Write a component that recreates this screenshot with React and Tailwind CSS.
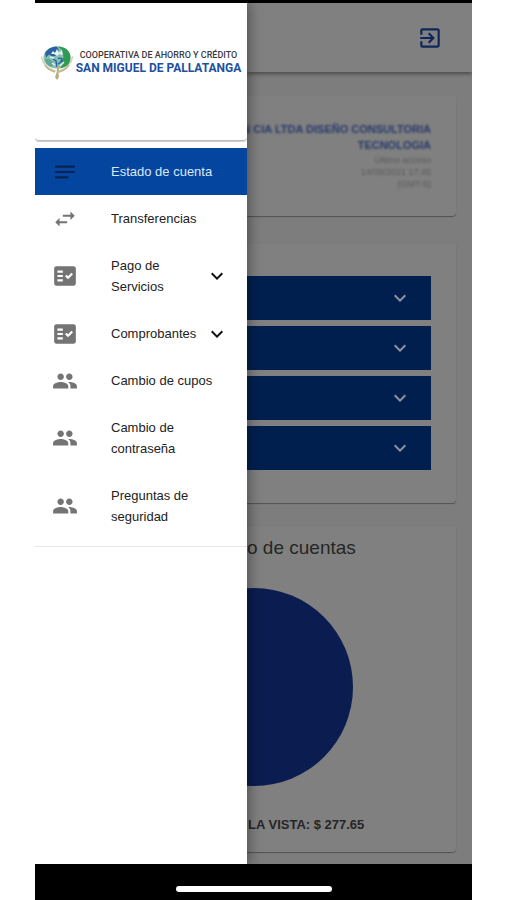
import React from "react";
import {
  MdNotes,
  MdSwapHoriz,
  MdFactCheck,
  MdPeople,
  MdExpandMore,
  MdExitToApp,
} from "react-icons/md";

const menu = [
  { label: "Estado de cuenta", icon: MdNotes, active: true },
  { label: "Transferencias", icon: MdSwapHoriz },
  { label: "Pago de Servicios", icon: MdFactCheck, expands: true },
  { label: "Comprobantes", icon: MdFactCheck, expands: true },
  { label: "Cambio de cupos", icon: MdPeople },
  { label: "Cambio de contraseña", icon: MdPeople },
  { label: "Preguntas de seguridad", icon: MdPeople },
];

const accounts = ["Ahorros", "Inversiones", "Créditos", "Certificados"];

function LogoMark() {
  return (
    <svg viewBox="0 0 34 36" className="h-9 w-[34px] shrink-0" aria-hidden="true">
      <path d="M1.5 12C3 20 8 24 15 26M32.5 12C31 20 26 24 19 26" fill="none" stroke="#d9d0b2" strokeWidth="1.500" strokeLinecap="round" />
      <ellipse cx="17" cy="12.500" rx="13.500" ry="11" fill="#86bfae" />
      <path d="M18 1.500c8 0 12.500 5 12.500 11S27 22 20 23.500c3-4 1-7 3-10s-2-4-1-7-3-3-4-5z" fill="#2f9a53" />
      <path d="M5 8c3-5 8-6.500 12-6.500l2 4-4 2 2 3-5 1-3-2-3 3z" fill="#2b62a4" />
      <path d="M5 14c3-1 6 1 8 3l-1 5c-4-1-7-4-7-8z" fill="#5fa79a" />
      <path d="M11 9l2-3 2 2 2-4 2 4 3-3 1 5-4-1-2 2-3-2z" fill="#e6f2f3" />
      <path d="M13 14l3 2 1 6M22 13l-1 4-3 2M18 13.500c3-1 4 0 4 3" fill="none" stroke="#2b62a4" strokeWidth="1.500" />
      <path d="M10 12l4 1M12 18l3 2M24 17l-4 4" fill="none" stroke="#e6f2f3" strokeWidth="1.500" />
      <path d="M17 20c0 5 0 8-2 12l2 3 2-3c-1-4 0-7 0-12z" fill="#b9ac7d" />
      <path d="M5 20c3 5 7 6 10 7M29 20c-3 5-7 6-10 7" fill="none" stroke="#c2b78c" strokeWidth="1.500" />
    </svg>
  );
}

function MenuItem({ label, icon: Icon, active, expands }) {
  return (
    <li>
      <button
        type="button"
        className={
          "flex w-full items-center py-[13px] pr-[18px] pl-[17px] text-left text-[13px] leading-[21px] " +
          (active ? "bg-[#04459f] text-[#dce6f5]" : "text-[#222222]")
        }
      >
        <Icon className={"mr-[33px] size-[26px] shrink-0 -my-1 " + (active ? "text-[#0a2352]" : "text-[#747474]")} />
        <span className="flex-1">{label}</span>
        {expands && <MdExpandMore className="size-6 shrink-0 -my-1 text-[#111111]" />}
      </button>
    </li>
  );
}

function Drawer() {
  return (
    <aside className="relative z-10 w-[212px] shrink-0 bg-white shadow-[2px_0_12px_rgba(0,0,0,0.4)]">
      <div className="flex h-[138px] items-start rounded-b border-b border-[#bcbcbc] pt-[42px] pr-1 pl-[5px] shadow-[0_1px_1px_rgba(0,0,0,0.2)]">
        <LogoMark />
        <div className="flex flex-1 flex-col items-center pt-1 font-['Roboto','Liberation_Sans',sans-serif] whitespace-nowrap">
          <p className="text-[9px] leading-3 font-medium text-[#3c3c3f]">COOPERATIVA DE AHORRO Y CRÉDITO</p>
          <p className="text-[12px] leading-[14px] font-bold text-[#1d509f]">SAN MIGUEL DE PALLATANGA</p>
        </div>
      </div>
      <nav className="border-b border-[#e6e6e6] pt-[7px] pb-[6px]">
        <ul>
          {menu.map((item) => (
            <MenuItem key={item.label} {...item} />
          ))}
        </ul>
      </nav>
    </aside>
  );
}

function Card({ children, className }) {
  return (
    <section className={"mr-4 rounded-br bg-[#808080] pr-[25px] shadow-[0_1px_1px_rgba(0,0,0,0.35)] " + className}>
      {children}
    </section>
  );
}

function Content() {
  return (
    <main className="min-w-0 flex-1 overflow-hidden bg-[#7d7d7d] pb-3">
      <header className="flex h-[69px] items-center justify-end bg-[#808080] pr-[29px] shadow-[0_2px_4px_rgba(0,0,0,0.4)]">
        <button type="button" aria-label="Salir" className="text-[#10265a]">
          <MdExitToApp className="size-[26px]" />
        </button>
      </header>

      <Card className="mt-6 h-[120px] pt-[25px] text-right">
        <div className="flex flex-col items-end blur-[1px]">
          <p className="text-[11px] leading-4 font-bold whitespace-nowrap text-[#27396b]">
            N CIA LTDA DISEÑO CONSULTORIA
            <br />
            TECNOLOGIA
          </p>
          <p className="pt-px text-[9px] leading-[12px] text-[#5a5a5a]">
            Último acceso
            <br />
            14/09/2021 17:45
            <br />
            (GMT-5)
          </p>
        </div>
      </Card>

      <Card className="mt-7 pt-8 pb-[33px]">
        <div className="flex flex-col gap-[6px]">
          {accounts.map((name) => (
            <button
              key={name}
              type="button"
              aria-label={name}
              className="flex h-11 w-full items-center justify-end bg-[#001f4f] pr-[19px] text-[#8d949f]"
            >
              <MdExpandMore className="size-6" />
            </button>
          ))}
        </div>
      </Card>

      <Card className="mt-6 pt-[9px] pb-[17px] text-[#262626]">
        <h2 className="text-[19px] leading-6 whitespace-nowrap">o de cuentas</h2>
        <svg viewBox="0 0 106 198" className="mt-7 h-[198px] w-[106px]" role="img" aria-label="Gráfico de cuentas">
          <circle cx="7" cy="99" r="99" fill="#0b1d50" />
        </svg>
        <p className="mt-[29px] pl-px text-[13px] leading-5 font-bold whitespace-nowrap">LA VISTA: $ 277.65</p>
      </Card>
    </main>
  );
}

export default function App() {
  return (
    <div className="min-h-screen bg-white px-[35px] font-['Liberation_Sans',Arial,sans-serif]">
      <div className="flex min-h-screen flex-col">
        <div className="h-[3px] bg-black" />
        <div className="flex flex-1 overflow-hidden">
          <Drawer />
          <Content />
        </div>
        <footer className="relative z-20 flex h-9 justify-center bg-black pt-[22px]">
          <div className="h-[6px] w-[156px] rounded-full bg-white" />
        </footer>
      </div>
    </div>
  );
}
